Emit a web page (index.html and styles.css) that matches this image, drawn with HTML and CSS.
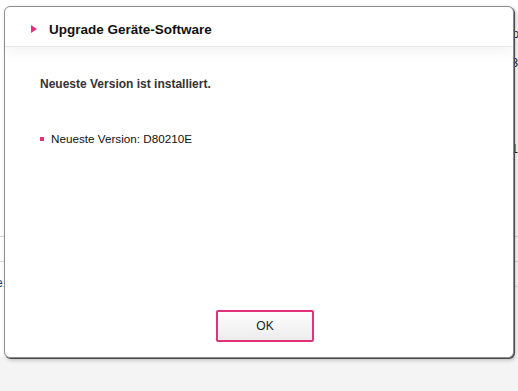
FILE: index.html
```html
<!DOCTYPE html>
<html lang="de">
<head>
  <meta charset="UTF-8" />
  <title>Upgrade Geräte-Software</title>
  <link rel="stylesheet" href="styles.css">
</head>
<body>

<!-- page behind the dialog -->
<div class="page">
  <div class="page-top">
    <span class="peek peek-or">or</span>
    <span class="peek peek-3">3</span>
    <span class="peek peek-1">1</span>
  </div>
  <div class="page-row"></div>
  <div class="page-row"><span class="peek-e">e</span></div>
  <div class="page-rest"></div>
  <div class="page-footer">
    <div class="blue-tab"></div>
  </div>
</div>

<!-- Dialog -->
<div class="dialog">
  <div class="dialog-header">
    <span class="arrow"></span>
    <h2 class="dialog-title">Upgrade Geräte-Software</h2>
  </div>
  <div class="dialog-body">
    <p class="status">Neueste Version ist installiert.</p>
    <ul class="info-list">
      <li>Neueste Version: D80210E</li>
    </ul>
  </div>
  <div class="dialog-footer">
    <button class="ok-btn">OK</button>
  </div>
</div>

</body>
</html>
```

FILE: styles.css
```css
/* Base Reset */
* { margin: 0; padding: 0; box-sizing: border-box; }
body {
  font-family: "Liberation Sans", Arial, sans-serif;
  background: #fff;
  width: 518px;
  height: 391px;
  overflow: hidden;
  position: relative;
}

/* Background page */
.page {
  display: flex;
  flex-direction: column;
  height: 391px;
}

.page-top {
  position: relative;
  height: 237px;
  border-bottom: 1px solid #d6d6d6;
}

.peek {
  position: absolute;
  color: #1d2f6a;
  font-size: 13px;
}
.peek-or { left: 512px; top: 26px; }
.peek-3 { left: 511px; top: 55px; }
.peek-1 { left: 511px; top: 141px; color: #4a1f3a; }

.page-row {
  height: 25px;
  border-bottom: 1px solid #dcdcdc;
  position: relative;
}
.peek-e {
  position: absolute;
  left: -4px;
  top: 14px;
  font-size: 12px;
  color: #1d3a78;
}

.page-rest { flex: 1; }

.page-footer {
  height: 34px;
  background: #f4f4f4;
  position: relative;
}

.blue-tab {
  position: absolute;
  left: 47px;
  top: 0;
  width: 98px;
  height: 2px;
  background: #1a6ea8;
}

/* Dialog */
.dialog {
  position: absolute;
  left: 4px;
  top: 6px;
  width: 510px;
  height: 352px;
  background: #fff;
  border: 1px solid #8c8c8c;
  border-radius: 6px;
  box-shadow: 1px 1px 0 #4a4a4a, 2px 2px 4px rgba(0,0,0,0.25);
  display: flex;
  flex-direction: column;
  overflow: hidden;
}

.dialog-header {
  height: 40px;
  display: flex;
  align-items: center;
  padding: 5px 0 0 26px;
  gap: 12px;
  border-bottom: 1px solid #e8e8e8;
  box-shadow: 0 5px 12px rgba(0,0,0,0.05);
  position: relative;
}

.arrow {
  width: 0;
  height: 0;
  border-top: 4px solid transparent;
  border-bottom: 4px solid transparent;
  border-left: 6px solid #e3307a;
  margin-top: -1px;
}

.dialog-title {
  font-size: 13.5px;
  font-weight: bold;
  color: #111;
}

.dialog-body {
  flex: 1;
  padding: 30px 0 0 35px;
}

.status {
  font-size: 12px;
  font-weight: bold;
  color: #333;
}

.info-list {
  list-style: none;
  margin-top: 41px;
}

.info-list li {
  font-size: 11.7px;
  color: #111;
  display: flex;
  align-items: center;
  gap: 7px;
}

.info-list li::before {
  content: "";
  width: 4px;
  height: 4px;
  background: #e3307a;
}

.dialog-footer {
  padding: 0 0 15px 211px;
}

.ok-btn {
  width: 98px;
  height: 32px;
  border: 2px solid #e3307a;
  border-radius: 2px;
  background: linear-gradient(#fdfdfd, #ececec);
  font-family: "Liberation Sans", Arial, sans-serif;
  font-size: 12px;
  color: #222;
}
```
